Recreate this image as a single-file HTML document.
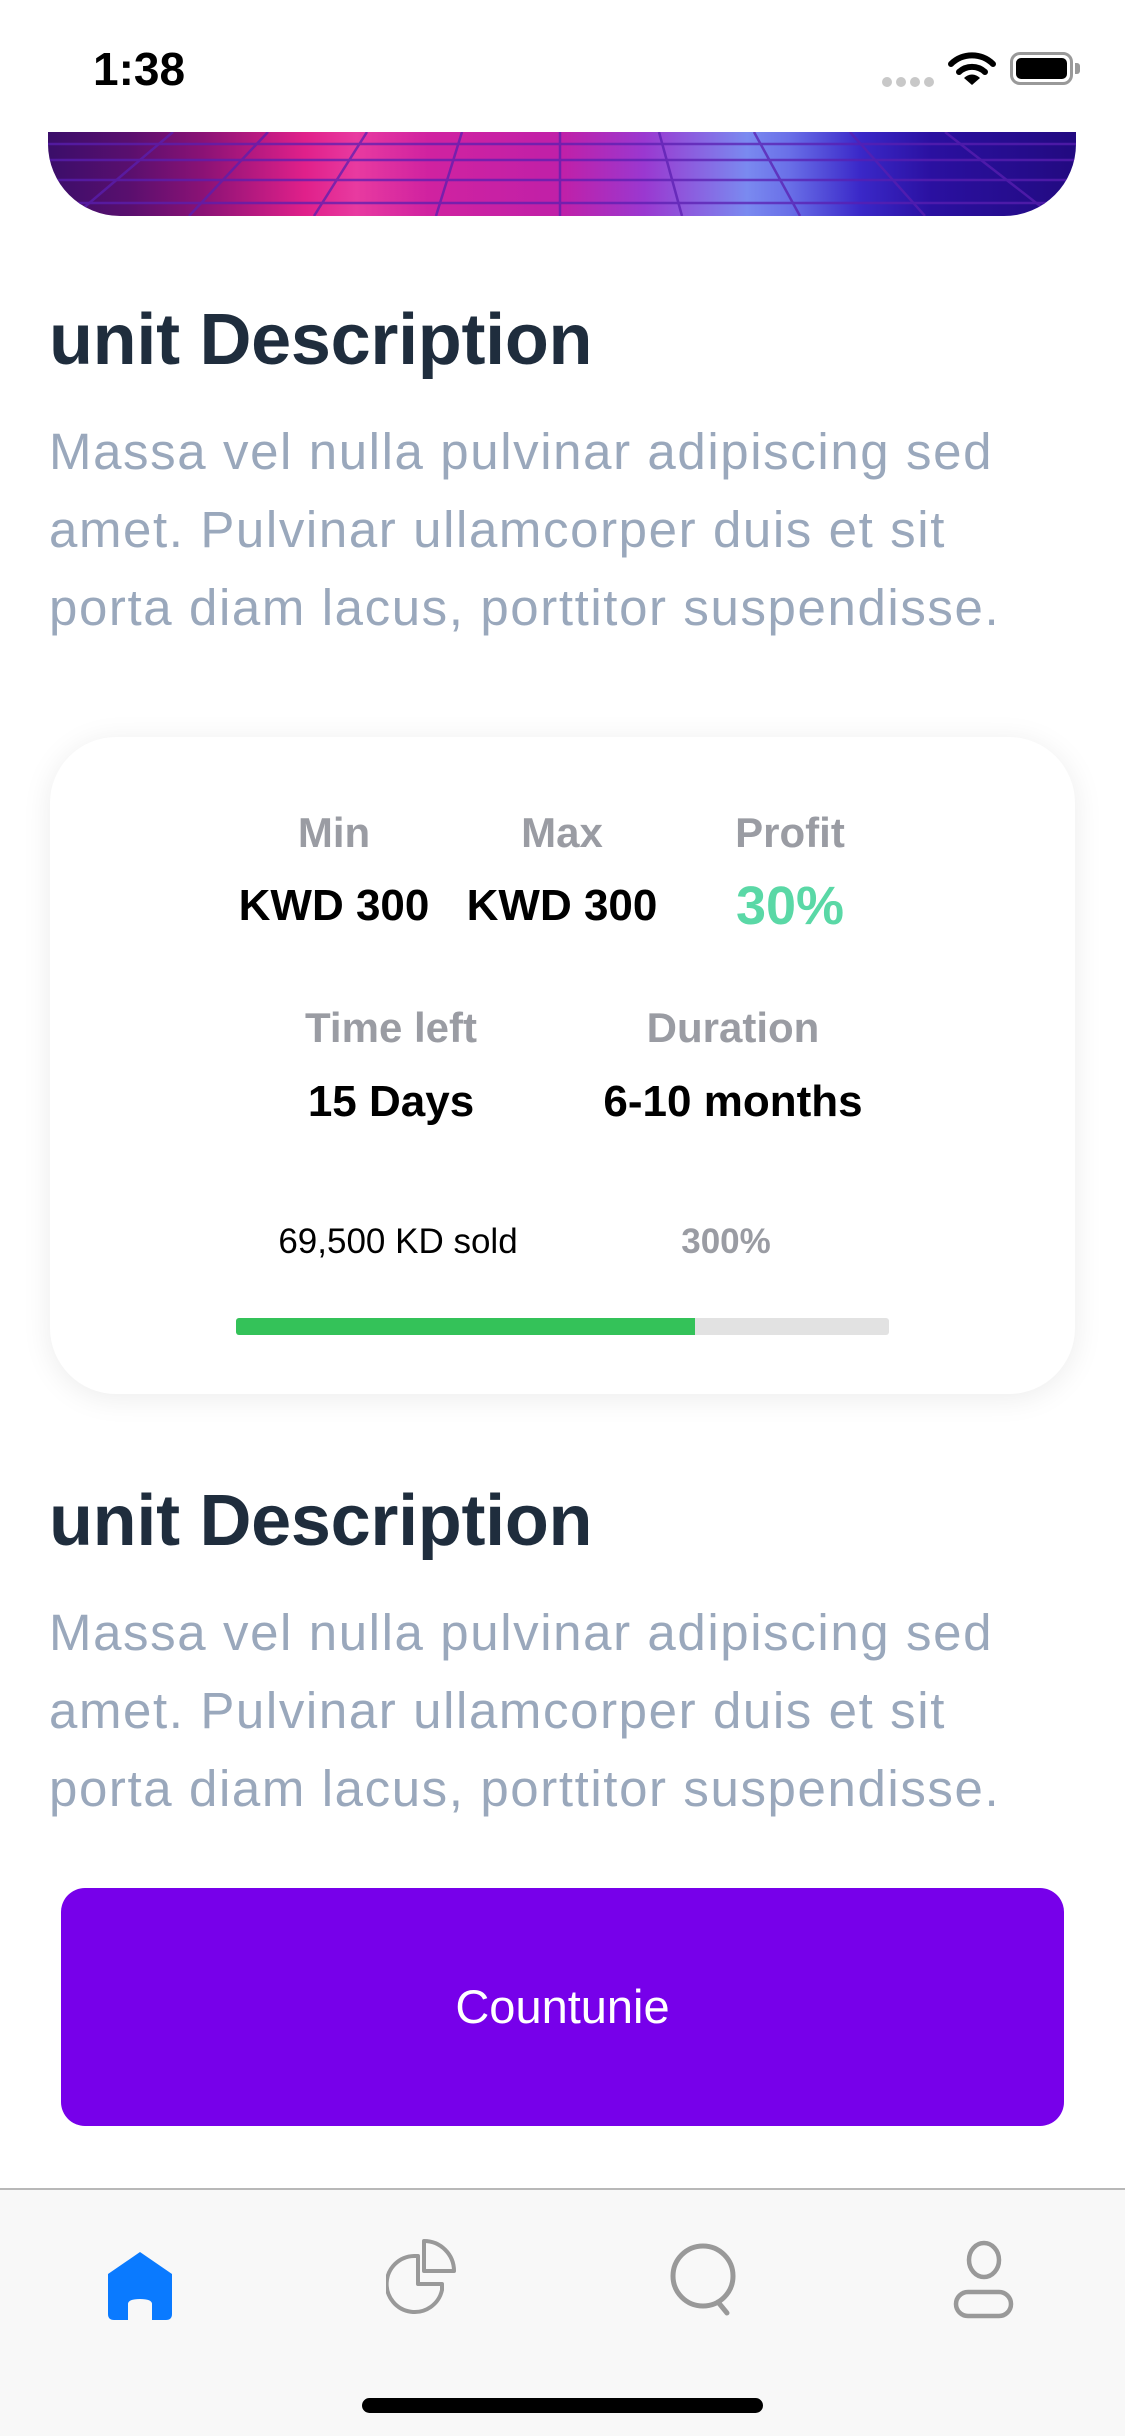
<!DOCTYPE html>
<html><head><meta charset="utf-8">
<style>
*{margin:0;padding:0;box-sizing:border-box}
body{width:1125px;height:2436px;background:#fff;position:relative;overflow:hidden;font-family:"Liberation Sans",sans-serif}
.abs{position:absolute}
.time{left:93px;top:42px;font-size:46px;font-weight:600;color:#000}
.hero{left:48px;top:132px;width:1028px;height:84px;border-radius:0 0 72px 72px;overflow:hidden;
background:linear-gradient(90deg,#3a0e6a 0%,#5a0f6e 8%,#8a1275 15%,#e0208a 25%,#e83aa0 30%,#d022a0 37%,#c020a8 50%,#9a38d0 58%,#7a8af0 68%,#6a70e8 72%,#3a28c8 79%,#2a10a0 86%,#220a80 100%)}
.hero svg{position:absolute;left:0;top:0}
h2{position:absolute;left:49px;font-size:72px;font-weight:700;color:#1f2d3d;letter-spacing:-0.3px}
.p{position:absolute;left:49px;width:1070px;font-size:51px;line-height:78px;color:#9aa8bc;letter-spacing:1.6px;white-space:nowrap}
.card{left:50px;top:737px;width:1025px;height:657px;border-radius:66px;background:#fff;box-shadow:0 4px 30px rgba(0,0,0,0.08)}
.c{position:absolute;transform:translateX(-50%);white-space:nowrap;text-align:center}
.lbl{font-size:42px;font-weight:700;color:#9a9ca3}
.val{font-size:44px;font-weight:700;color:#000}
.btn{left:61px;top:1888px;width:1003px;height:238px;border-radius:24px;background:#7700ea;color:#fff;font-size:47px;text-align:center;line-height:238px}
.tab{left:0;top:2188px;width:1125px;height:248px;background:#f8f8f8;border-top:2px solid #b8b8b8}
.ind{left:362px;top:2398px;width:401px;height:15px;border-radius:8px;background:#000}
</style></head><body>
<div class="abs time">1:38</div>
<div class="abs" style="left:882px;top:77px;display:flex;gap:4px">
<div style="width:10px;height:10px;border-radius:5px;background:#c8c8c8"></div><div style="width:10px;height:10px;border-radius:5px;background:#c8c8c8"></div><div style="width:10px;height:10px;border-radius:5px;background:#c8c8c8"></div><div style="width:10px;height:10px;border-radius:5px;background:#c8c8c8"></div></div>
<svg class="abs" style="left:948px;top:52px" width="48" height="34" viewBox="0 0 48 34">
<path d="M3 12 A30 30 0 0 1 45 12" stroke="#000" stroke-width="6" fill="none" stroke-linecap="round"/>
<path d="M11 20 A19 19 0 0 1 37 20" stroke="#000" stroke-width="6" fill="none" stroke-linecap="round"/>
<path d="M16 26 L24 33 L32 26 A11 11 0 0 0 16 26Z" fill="#000"/></svg>
<div class="abs" style="left:1010px;top:52px;width:63px;height:33px;border:3px solid #999;border-radius:10px;padding:3px"><div style="width:100%;height:100%;background:#000;border-radius:5px"></div></div>
<div class="abs" style="left:1075px;top:63px;width:5px;height:11px;background:#999;border-radius:0 3px 3px 0"></div>

<div class="abs hero"><svg width="1028" height="84">
<g stroke="#5a1fb0" stroke-width="2.5" opacity="0.75" fill="none">
<line x1="0" y1="12" x2="1028" y2="12"/><line x1="0" y1="28" x2="1028" y2="28"/><line x1="0" y1="48" x2="1028" y2="48"/><line x1="0" y1="71" x2="1028" y2="71"/>
<line x1="125" y1="0" x2="26" y2="84"/><line x1="220" y1="0" x2="141" y2="84"/><line x1="319" y1="0" x2="266" y2="84"/><line x1="414" y1="0" x2="388" y2="84"/><line x1="512" y1="0" x2="512" y2="84"/><line x1="611" y1="0" x2="634" y2="84"/><line x1="706" y1="0" x2="752" y2="84"/><line x1="802" y1="0" x2="877" y2="84"/><line x1="897" y1="0" x2="1005" y2="84"/>
</g></svg></div>

<h2 style="top:299px">unit Description</h2>
<div class="p" style="top:413px">Massa vel nulla pulvinar adipiscing sed<br>amet. Pulvinar ullamcorper duis et sit<br>porta diam lacus, porttitor suspendisse.</div>

<div class="abs card"></div>
<div class="c lbl" style="left:334px;top:809px">Min</div>
<div class="c lbl" style="left:562px;top:809px">Max</div>
<div class="c lbl" style="left:790px;top:809px">Profit</div>
<div class="c val" style="left:334px;top:881px">KWD 300</div>
<div class="c val" style="left:562px;top:881px">KWD 300</div>
<div class="c val" style="left:790px;top:875px;font-size:54px;color:#5ad8a6">30%</div>
<div class="c lbl" style="left:391px;top:1004px">Time left</div>
<div class="c lbl" style="left:733px;top:1004px">Duration</div>
<div class="c val" style="left:391px;top:1077px">15 Days</div>
<div class="c val" style="left:733px;top:1077px">6-10 months</div>
<div class="c" style="left:398px;top:1222px;font-size:35px;color:#000">69,500 KD sold</div>
<div class="c" style="left:726px;top:1222px;font-size:35px;font-weight:700;color:#9a9ca3">300%</div>
<div class="abs" style="left:236px;top:1318px;width:653px;height:17px;background:#e2e2e2;border-radius:3px"></div>
<div class="abs" style="left:236px;top:1318px;width:459px;height:17px;background:#34c259;border-radius:3px 0 0 3px"></div>

<h2 style="top:1480px">unit Description</h2>
<div class="p" style="top:1594px">Massa vel nulla pulvinar adipiscing sed<br>amet. Pulvinar ullamcorper duis et sit<br>porta diam lacus, porttitor suspendisse.</div>

<div class="abs btn">Countunie</div>

<div class="abs tab"></div>
<svg class="abs" style="left:108px;top:2252px" width="64" height="68" viewBox="0 0 64 68">
<path d="M32 0 L64 22 L64 62 Q64 68 58 68 L44 68 L44 52 Q44 47 32 47 Q20 47 20 52 L20 68 L6 68 Q0 68 0 62 L0 22 Z" fill="#0a7aff"/></svg>
<svg class="abs" style="left:386px;top:2238px" width="72" height="78" viewBox="0 0 72 78">
<g stroke="#999" stroke-width="4" fill="none" stroke-linejoin="round">
<path d="M30 16 A28 28 0 1 0 58 50 L58 44 L34 44 L34 16 Z" transform="translate(-2,2)"/>
<path d="M38 3 A30 30 0 0 1 68 33 L38 33 Z"/></g></svg>
<svg class="abs" style="left:668px;top:2240px" width="76" height="78" viewBox="0 0 76 78">
<g stroke="#999" stroke-width="5" fill="none" stroke-linecap="round">
<circle cx="35" cy="36" r="30"/><line x1="50" y1="62" x2="59" y2="73"/></g></svg>
<svg class="abs" style="left:952px;top:2240px" width="64" height="80" viewBox="0 0 64 80">
<g stroke="#999" stroke-width="4.5" fill="none">
<ellipse cx="32" cy="20" rx="15" ry="17"/><rect x="4" y="52" width="55" height="24" rx="12"/></g></svg>
<div class="abs ind"></div>
</body></html>
